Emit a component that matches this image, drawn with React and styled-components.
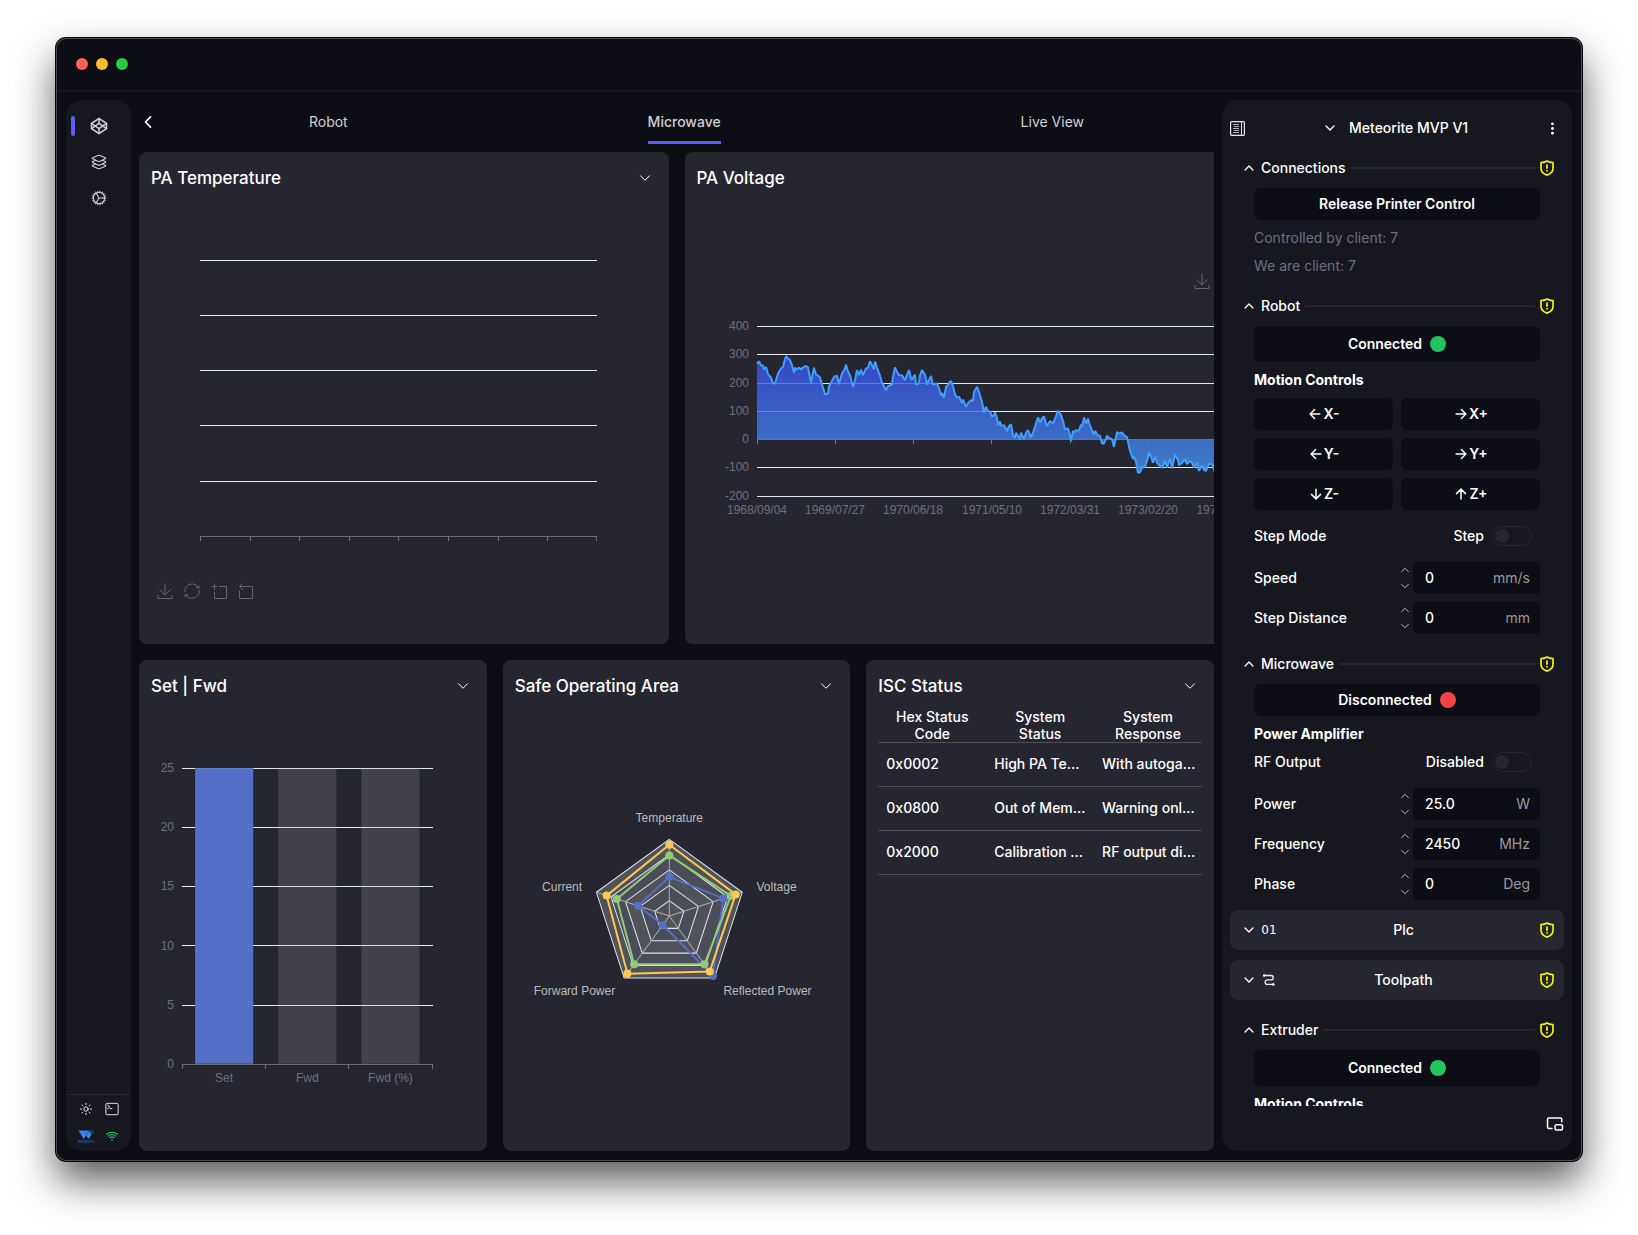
import React from 'react';
import styled, { createGlobalStyle } from 'styled-components';
import {
  IoLayersOutline,
  IoCogOutline,
  IoSunnyOutline,
  IoTerminalOutline,
  IoWifi,
  IoChevronBack,
  IoChevronDown,
  IoChevronUp,
  IoEllipsisVertical,
  IoArrowBack,
  IoArrowForward,
  IoArrowDown,
  IoArrowUp,
} from 'react-icons/io5';
import { FiCodepen } from 'react-icons/fi';
import { PictureInPicture2 } from 'lucide-react';

const color = {
  base: '#0d0d15',
  panel: '#17171f',
  card: '#262630',
  text: '#ffffff',
  soft: '#d0d0d2',
  muted: '#6b7080',
  unit: '#9a9a9e',
  accent: '#5c5cff',
  warn: '#f2f20d',
  ok: '#22c55e',
  bad: '#ef4444',
  axis: '#6e7079',
  grid: '#e0e6f1',
};

const GlobalStyle = createGlobalStyle`
  *, *::before, *::after { box-sizing: border-box; }
  body {
    margin: 0;
    background: #fff;
    color: ${color.text};
    font: 500 14px/20px Inter, "Liberation Sans", sans-serif;
  }
  button, input, select {
    font: inherit;
    color: inherit;
    background: none;
    border: 0;
    padding: 0;
    margin: 0;
  }
  button { cursor: pointer; }
  svg { display: block; flex: none; }
`;

/* ---------- window frame ---------- */

const Desktop = styled.div`
  min-height: 100vh;
  padding: 38px 56px 74px;
  display: flex;
  overflow: hidden;
`;

const AppWindow = styled.div`
  flex: 1;
  min-width: 0;
  height: calc(100vh - 112px);
  display: flex;
  flex-direction: column;
  border-radius: 10px;
  background: ${color.base};
  box-shadow: inset 0 0 0 1px #4c4c52, 0 0 0 1px #050507, 0 20px 40px rgba(0, 0, 0, 0.65);
`;

const TitleBar = styled.header`
  height: 54px;
  flex: none;
  padding: 0 19px;
  display: flex;
  align-items: center;
  gap: 8px;
  margin: 0 1px;
  border-bottom: 2px solid ${color.panel};
`;

const Light = styled.button`
  width: 12px;
  height: 12px;
  border-radius: 50%;
  background: ${(p) => p.$tone};
`;

const Workspace = styled.div`
  flex: 1;
  min-height: 0;
  padding: 8px 10px 10px;
  display: flex;
  gap: 8px;
`;

/* ---------- left rail ---------- */

const Rail = styled.nav`
  width: 65px;
  flex: none;
  display: flex;
  flex-direction: column;
  border-radius: 16px;
  background: ${color.panel};
`;

const RailItems = styled.div`
  flex: 1;
  padding-top: 8px;
`;

const RailButton = styled.button`
  width: 100%;
  height: 36px;
  display: grid;
  grid-template-columns: 4px 1fr 4px;
  align-items: center;
  justify-items: center;
  padding: 0 5px;
  color: ${color.soft};

  &::before {
    content: '';
    width: 4px;
    height: 20px;
    border-radius: 2px;
    background: ${(p) => (p.$active ? color.accent : 'transparent')};
  }
`;

const RailFooter = styled.div`
  height: 57px;
  padding-left: 7px;
  display: grid;
  grid-template-columns: 26px 26px;
  grid-template-rows: 27px 28px;
  justify-items: center;
  justify-content: start;
  align-items: center;
  border-top: 1px solid ${color.card};
`;

const PlainButton = styled.button`
  display: flex;
  align-items: center;
  justify-content: center;
  color: ${(p) => p.$tone || color.text};
`;

/* ---------- centre ---------- */

const Board = styled.main`
  flex: 1;
  min-width: 0;
  display: flex;
  flex-direction: column;
  overflow: hidden;
`;

const TabBar = styled.div`
  height: 52px;
  flex: none;
  display: flex;
  padding-top: 8px;
`;

const BackButton = styled(PlainButton)`
  width: 20px;
  height: 28px;
  flex: none;
  justify-content: flex-start;
`;

const Tabs = styled.div`
  width: 100%;
  flex: none;
  display: flex;
  justify-content: space-around;
  align-items: flex-start;
`;

const Tab = styled.button`
  height: 36px;
  padding-bottom: 5px;
  color: ${color.soft};
  font-weight: ${(p) => (p.$active ? 500 : 400)};
  border-bottom: 3px solid ${(p) => (p.$active ? color.accent : 'transparent')};
`;

const Rows = styled.div`
  flex: 1;
  min-height: 0;
  display: grid;
  grid-template-rows: minmax(0, 1fr) minmax(0, 1fr);
  gap: 16px;
`;

const TopRow = styled.div`
  min-width: 0;
  display: flex;
  gap: 16px;
`;

const BottomRow = styled.div`
  display: grid;
  grid-template-columns: repeat(3, minmax(0, 1fr));
  gap: 16px;
`;

const CardBox = styled.section`
  min-width: 0;
  min-height: 0;
  flex: 0 0 ${(p) => p.$basis || 'auto'};
  display: flex;
  flex-direction: column;
  padding: 12px;
  border-radius: 8px;
  background: ${color.card};
  overflow: hidden;
`;

const CardHead = styled.div`
  height: 28px;
  flex: none;
  display: flex;
  align-items: center;
  justify-content: space-between;
  padding-right: 4px;

  path {
    stroke-width: 32px;
  }
`;

const CardTitle = styled.h2`
  margin: 0;
  font-size: 17px;
  line-height: 28px;
  font-weight: 500;
`;

const Plot = styled.svg`
  width: 100%;
  flex: 1;
  min-height: 0;
  font: 12px "Liberation Sans", Arial, sans-serif;
`;

const ToolRow = styled.div`
  display: flex;
  flex: none;
  gap: 11px;
  justify-content: ${(p) => (p.$end ? 'flex-end' : 'flex-start')};
  padding: ${(p) => (p.$end ? '81px 0 0' : '0 6px 33px')};
`;

const StatusTable = styled.table`
  width: 100%;
  margin-top: 8px;
  table-layout: fixed;
  border-collapse: collapse;

  th {
    padding: 0 12px;
    height: 35px;
    line-height: 17px;
    font-weight: 500;
    text-align: center;
    border-bottom: 1px solid #4f4f4f;
  }

  td {
    height: 44px;
    padding: 0 4px 2px 8px;
    overflow: hidden;
    white-space: nowrap;
    text-overflow: ellipsis;
    border-bottom: 1px solid #4f4f4f;
  }
`;

/* ---------- right panel ---------- */

const Side = styled.aside`
  width: 350px;
  flex: none;
  padding: 8px;
  display: flex;
  flex-direction: column;
  border-radius: 16px;
  background: ${color.panel};
`;

const SideHead = styled.div`
  height: 40px;
  flex: none;
  display: flex;
  align-items: center;
  justify-content: space-between;
  padding-right: 4px;
`;

const MachinePicker = styled.label`
  display: flex;
  align-items: center;
  gap: 12px;
  padding-left: 2px;

  select {
    appearance: none;
    outline: none;
  }
`;

const Scroller = styled.div`
  flex: 1;
  min-height: 0;
  display: flex;
  flex-direction: column;
  gap: 10px;
  overflow-y: auto;
  scrollbar-width: none;
`;

const Section = styled.section`
  flex: none;
`;

const SectionHead = styled.button`
  width: 100%;
  height: 40px;
  display: flex;
  align-items: center;
  gap: 5px;
  padding: 0 10px 0 12px;
  border-radius: 8px;
  flex: none;
  background: ${(p) => (p.$closed ? color.card : 'transparent')};
`;

const Rule = styled.span`
  flex: 1;
  height: 2px;
  background: ${color.card};
`;

const ClosedIcon = styled.span`
  width: 16px;
  display: flex;
  justify-content: center;
  font: 12px "DejaVu Sans", sans-serif;
`;

const ClosedTitle = styled.span`
  flex: 1;
  padding-right: 10px;
  text-align: center;
`;

const Body = styled.div`
  display: flex;
  flex-direction: column;
  gap: 8px;
  padding: 0 24px;
`;

const Action = styled.button`
  height: ${(p) => (p.$tall ? 36 : 32)}px;
  display: flex;
  align-items: center;
  justify-content: center;
  gap: ${(p) => (p.$tight ? 0 : 8)}px;
  border-radius: 6px;
  background: ${color.base};
  font-weight: 600;
`;

const Dot = styled.span`
  width: 16px;
  height: 16px;
  border-radius: 50%;
  background: ${(p) => p.$tone};
`;

const Note = styled.p`
  margin: 0;
  color: ${color.muted};
  font-weight: 400;
`;

const SubHead = styled.h3`
  margin: 0;
  font-size: 14px;
  line-height: 20px;
  font-weight: 700;
`;

const JogGrid = styled.div`
  display: grid;
  grid-template-columns: 1fr 1fr;
  gap: 8px;
`;

const ToggleRow = styled.div`
  display: flex;
  align-items: center;
  justify-content: space-between;
  padding: ${(p) => (p.$spaced ? '8px' : '0')} 8px 8px 0;
`;

const ToggleLabel = styled.label`
  display: flex;
  align-items: center;
  gap: 8px;
`;

const Switch = styled.input.attrs({ type: 'checkbox', role: 'switch' })`
  appearance: none;
  width: 40px;
  height: 20px;
  border: 1px solid ${color.card};
  border-radius: 10px;
  display: flex;
  align-items: center;
  padding: 0 2px;

  &::before {
    content: '';
    width: 14px;
    height: 14px;
    border-radius: 50%;
    background: ${color.card};
  }

  &:checked {
    justify-content: flex-end;
  }
`;

const FieldRow = styled.div`
  height: 32px;
  display: flex;
  align-items: center;
`;

const FieldName = styled.label`
  flex: 1;
`;

const Stepper = styled.div`
  width: 16px;
  height: 28px;
  display: flex;
  flex-direction: column;
  justify-content: space-between;

  path {
    stroke-width: 36px;
  }
`;

const FieldBox = styled.div`
  width: 127px;
  height: 32px;
  display: flex;
  align-items: center;
  padding: 0 10px 0 12px;
  border-radius: 4px;
  background: ${color.base};

  input {
    flex: 1;
    min-width: 0;
    outline: none;
  }

  span {
    color: ${color.unit};
    font-weight: 400;
  }
`;

const SideFoot = styled.div`
  height: 37px;
  flex: none;
  display: flex;
  align-items: center;
  justify-content: flex-end;
  padding-bottom: 2px;
`;

/* ---------- drawings ---------- */

const ShieldIcon = () => (
  <svg width="14" height="16" viewBox="0 0 14 16" fill="none" stroke={color.warn}>
    <path
      d="M7 1 C5.4 2.2 3.4 2.6 1 2.6 V8.6 C1 11.8 3.4 13.9 7 15.1 C10.6 13.9 13 11.8 13 8.6 V2.6 C10.6 2.6 8.6 2.2 7 1 Z"
      strokeWidth="1.7"
      strokeLinejoin="round"
    />
    <path d="M7 4.6 V8.8 M7 10 V11.6" strokeWidth="1.8" />
  </svg>
);

const LogIcon = () => (
  <svg width="15" height="15" viewBox="0 0 15 15" fill="none" stroke="#e6e6e8">
    <rect x="0.6" y="0.6" width="13.8" height="13.8" rx="1" strokeWidth="1.2" />
    <path d="M11.5 0.5 V14.5" />
    <path d="M3 3.5 H9 M4 5.5 H9 M3 7.5 H9 M4 9.5 H9 M3 11.5 H9" stroke="#b4b4b8" />
  </svg>
);

const RouteIcon = () => (
  <svg width="12" height="12" viewBox="0 0 12 12" fill="none" stroke="#f0f0f0" strokeWidth="1.3">
    <path d="M1 1.5 H8 A2.2 2.2 0 0 1 8 5.9 H4.4 A2.2 2.2 0 0 0 4.4 10.4 H11" />
    <circle cx="1.3" cy="1.5" r="0.7" fill="#f0f0f0" />
    <path d="M9.6 9.2 L11.2 10.4 L9.6 11.6" />
  </svg>
);

const GpuLogo = () => (
  <svg width="16" height="13" viewBox="0 0 16 13" fill="#3b82f6">
    <path d="M0.5 0.5 H11 L5.8 9 Z" />
    <path d="M11.4 0.8 L13.6 4.4 L10.8 9 L8.2 5.6 Z" />
    <path d="M12 0.5 H14.4 L13.2 2.5 Z M14.8 1 L15.8 2.8 L14 4 Z" fill="#2563c9" />
    <text x="8" y="12.6" fontSize="4" textAnchor="middle" fill="#2f5fae" fontFamily="Inter, sans-serif">
      WebGPU
    </text>
  </svg>
);

const toolPaths = {
  save: 'M8 0.5 V11 M2.5 6.5 L8 12 L13.5 6.5 M1 12 V15.5 H15 V12',
  restore: 'M0.8 9 A7.3 7.3 0 0 1 14.6 5 M15.2 7 A7.3 7.3 0 0 1 1.6 11.5 M15.3 2.5 L14.7 5.3 L12 4.6 M0.7 14 L1.4 11.3 L4 11.9',
  zoom: 'M0.5 3.5 H6 M3.5 0.5 V7 M3.5 9 V15.5 H15.5 V3.5 H8',
  back: 'M4.5 0.5 L1.5 3.5 L5 7 M2 3.5 H14.5 V15.5 H1.5 V7.5',
};

const toolNames = {
  save: 'Save as image',
  restore: 'Restore',
  zoom: 'Area zoom',
  back: 'Reset zoom',
};

function ChartTools({ end }) {
  return (
    <ToolRow $end={end}>
      {Object.keys(toolPaths).map((key) => (
        <PlainButton key={key} aria-label={toolNames[key]}>
          <svg width="16" height="16" viewBox="0 0 16 16" fill="none" stroke="#666666">
            <path d={toolPaths[key]} />
          </svg>
        </PlainButton>
      ))}
    </ToolRow>
  );
}

/* ---------- charts ---------- */

function GridLines({ x1, x2, ys }) {
  return (
    <g stroke={color.grid} shapeRendering="crispEdges">
      {ys.map((y) => (
        <line key={y} x1={x1} x2={x2} y1={y + 0.5} y2={y + 0.5} />
      ))}
    </g>
  );
}

function BaseAxis({ x1, x2, y, ticks }) {
  return (
    <g stroke={color.axis} shapeRendering="crispEdges">
      <line x1={x1} x2={x2} y1={y + 0.5} y2={y + 0.5} />
      {ticks.map((x) => (
        <line key={x} x1={x + 0.5} x2={x + 0.5} y1={y} y2={y + 5} />
      ))}
    </g>
  );
}

function TemperatureChart() {
  return (
    <Plot viewBox="0 0 506 390" preserveAspectRatio="xMinYMin meet" role="img" aria-label="PA temperature">
      <GridLines x1={49} x2={446} ys={[68, 123, 178, 233, 289]} />
      <BaseAxis x1={49} x2={446} y={344} ticks={[49, 99, 148, 198, 247, 297, 347, 396, 445]} />
    </Plot>
  );
}

const voltage = [
  [60, 268], [62, 276], [64, 262], [66, 261], [67, 247], [69, 256], [71, 231], [74, 219], [76, 198], [78, 198],
  [81, 233], [84, 251], [86, 256], [87, 271], [89, 294], [91, 286], [93, 280], [95, 262], [97, 235], [98, 254],
  [99, 245], [102, 254], [104, 247], [106, 254], [109, 260], [111, 254], [114, 198], [115, 221], [117, 253],
  [119, 229], [121, 226], [123, 219], [125, 195], [128, 160], [131, 162], [132, 188], [135, 207], [137, 221],
  [140, 225], [142, 195], [145, 233], [148, 251], [149, 265], [151, 239], [153, 227], [156, 186], [158, 209],
  [160, 245], [162, 227], [164, 247], [166, 227], [169, 251], [171, 253], [173, 276], [177, 248], [178, 275],
  [180, 253], [183, 225], [185, 200], [189, 174], [191, 188], [195, 194], [196, 221], [198, 254], [200, 239],
  [202, 227], [205, 227], [208, 209], [210, 227], [212, 245], [214, 215], [215, 212], [218, 229], [219, 194],
  [222, 198], [223, 227], [225, 245], [228, 229], [230, 194], [234, 224], [236, 194], [240, 198], [242, 180],
  [244, 156], [245, 165], [247, 147], [249, 186], [251, 192], [252, 201], [254, 206], [256, 188], [258, 159],
  [260, 147], [262, 151], [265, 129], [266, 141], [269, 115], [271, 129], [274, 139], [276, 136], [277, 168],
  [280, 186], [282, 168], [285, 133], [287, 95], [289, 115], [291, 101], [293, 98], [295, 80], [297, 86],
  [298, 96], [300, 76], [301, 51], [303, 64], [304, 48], [307, 51], [308, 45], [310, 29], [312, 48], [314, 54],
  [316, 15], [318, 6], [319, 24], [323, 0], [324, 24], [327, 1], [329, 24], [331, 33], [334, 7], [336, 24],
  [339, 56], [341, 78], [343, 60], [345, 74], [347, 82], [349, 56], [350, 48], [353, 65], [356, 56], [358, 74],
  [361, 101], [364, 86], [366, 65], [368, 36], [371, 39], [373, 15], [374, -6], [376, 31], [377, 24], [379, 33],
  [382, 31], [384, 53], [385, 45], [387, 78], [389, 56], [391, 74], [392, 60], [395, 31], [397, 18], [398, 31],
  [401, 15], [403, 13], [405, -14], [407, -14], [408, -6], [410, 13], [412, 6], [415, 1], [417, -26], [420, 27],
  [422, 21], [425, 25], [427, 15], [430, 9], [431, -8], [433, -41], [434, -49], [436, -69], [437, -61],
  [439, -79], [441, -118], [443, -116], [445, -100], [448, -96], [451, -65], [452, -46], [454, -61], [456, -82],
  [458, -61], [460, -82], [462, -91], [465, -100], [468, -76], [470, -100], [473, -67], [475, -102], [478, -53],
  [481, -73], [482, -91], [485, -82], [488, -71], [490, -87], [493, -76], [495, -82], [497, -99], [500, -82],
  [502, -111], [505, -91], [507, -108], [509, -111], [512, -87], [515, -87], [517, -108], [521, -126],
  [530, -110], [542, -134], [556, -120], [570, -140], [594, -128],
];

const voltageLevels = [
  [400, 37], [300, 65], [200, 94], [100, 122], [0, 150], [-100, 178], [-200, 207],
];

const voltageDates = ['1968/09/04', '1969/07/27', '1970/06/18', '1971/05/10', '1972/03/31', '1973/02/20', '1974/01/11'];

function VoltageChart() {
  const zero = 150.5;
  const points = voltage.map(([x, v]) => `${x},${(zero - v * 0.2833).toFixed(1)}`).join(' ');
  return (
    <Plot viewBox="0 0 594 342" preserveAspectRatio="xMinYMin meet" role="img" aria-label="PA voltage">
      <defs>
        <linearGradient id="voltageFill" gradientUnits="userSpaceOnUse" x1="0" y1="66" x2="0" y2="184">
          <stop offset="0" stopColor="#3a4de9" />
          <stop offset="1" stopColor="#4593e9" />
        </linearGradient>
      </defs>
      <GridLines x1={60} x2={594} ys={voltageLevels.filter(([v]) => v !== 0).map(([, y]) => y)} />
      <BaseAxis x1={60} x2={594} y={150} ticks={[60, 138, 216, 294, 373, 451, 529]} />
      <polygon points={`60,${zero} ${points} 594,${zero}`} fill="url(#voltageFill)" opacity="0.8" />
      <polyline points={points} fill="none" stroke="#409eff" strokeWidth="2" strokeLinejoin="bevel" />
      <g fill={color.axis}>
        {voltageLevels.map(([v, y]) => (
          <text key={v} x="52" y={y + 4} textAnchor="end">{v}</text>
        ))}
        {voltageDates.map((d, i) => (
          <text key={d} x={60 + Math.round(i * 78.2)} y="225" textAnchor="middle">{d}</text>
        ))}
      </g>
    </Plot>
  );
}

function PowerBars() {
  const levels = [[25, 68], [20, 127], [15, 186], [10, 245], [5, 304], [0, 363]];
  const bars = [['Set', 44, true], ['Fwd', 127, false], ['Fwd (%)', 210, false]];
  return (
    <Plot viewBox="0 0 323 438" preserveAspectRatio="xMinYMin meet" role="img" aria-label="Set and forward power">
      <GridLines x1={31} x2={281} ys={levels.slice(0, 5).map(([, y]) => y)} />
      {bars.map(([name, x, full]) => (
        <rect
          key={name}
          x={x}
          y="68"
          width="58"
          height="295"
          fill={full ? '#5470c6' : 'rgba(180, 180, 180, 0.2)'}
        />
      ))}
      <BaseAxis x1={31} x2={281} y={363} ticks={[31, 114, 197, 280]} />
      <g fill={color.axis}>
        {levels.map(([v, y]) => (
          <text key={v} x="23" y={y + 4} textAnchor="end">{v}</text>
        ))}
        {bars.map(([name, x]) => (
          <text key={name} x={x + 29} y="381" textAnchor="middle">{name}</text>
        ))}
      </g>
    </Plot>
  );
}

const CX = 154;
const CY = 215.5;
const RADIUS = 76.5;

const radarPoint = (i, r) => {
  const a = (i * 2 * Math.PI) / 5;
  return [CX + Math.sin(a) * r * RADIUS, CY - Math.cos(a) * r * RADIUS];
};

const ring = (values) => values.map((r, i) => radarPoint(i, r).map((n) => n.toFixed(1)).join(',')).join(' ');

/* axis order: temperature, voltage, reflected, forward, current */
const radarSeries = [
  ['#5470c6', [0.51, 0.74, 0.967, 0.145, 0.43]],
  ['#91cc75', [0.79, 0.844, 0.78, 0.78, 0.72]],
  ['#fac858', [0.93, 0.91, 0.897, 0.93, 0.86]],
];

function OperatingRadar() {
  return (
    <Plot viewBox="0 0 323 438" preserveAspectRatio="xMinYMin meet" role="img" aria-label="Safe operating area">
      {[1, 0.8, 0.6, 0.4, 0.2].map((r, i) => (
        <polygon key={r} points={ring([r, r, r, r, r])} fill={i % 2 ? '#4a4c57' : '#515158'} stroke={color.grid} />
      ))}
      <g stroke="#a9abb0">
        {[0, 1, 2, 3, 4].map((i) => {
          const [x, y] = radarPoint(i, 1);
          return <line key={i} x1={CX} y1={CY} x2={x} y2={y} />;
        })}
      </g>
      {radarSeries.map(([tone, values]) => (
        <g key={tone}>
          <polygon points={ring(values)} fill="none" stroke={tone} strokeWidth="2" strokeLinejoin="bevel" />
          {values.map((v, i) => {
            const [x, y] = radarPoint(i, v);
            return <circle key={i} cx={x} cy={y} r="4" fill={tone} />;
          })}
        </g>
      ))}
      <g fill="#bbbbbb">
        <text x="154" y="122" textAnchor="middle">Temperature</text>
        <text x="241" y="191">Voltage</text>
        <text x="208" y="294">Reflected Power</text>
        <text x="100" y="294" textAnchor="end">Forward Power</text>
        <text x="67" y="191" textAnchor="end">Current</text>
      </g>
    </Plot>
  );
}

/* ---------- composed parts ---------- */

function Card({ title, basis, children }) {
  return (
    <CardBox $basis={basis}>
      <CardHead>
        <CardTitle>{title}</CardTitle>
        <PlainButton aria-label={`${title} options`}>
          <IoChevronDown size={16} />
        </PlainButton>
      </CardHead>
      {children}
    </CardBox>
  );
}

function OpenSection({ title, children }) {
  return (
    <Section>
      <SectionHead aria-expanded="true">
        <IoChevronUp size={14} />
        {title}
        <Rule />
        <ShieldIcon />
      </SectionHead>
      <Body>{children}</Body>
    </Section>
  );
}

function ClosedSection({ title, icon }) {
  return (
    <SectionHead $closed aria-expanded="false">
      <IoChevronDown size={14} />
      <ClosedIcon>{icon}</ClosedIcon>
      <ClosedTitle>{title}</ClosedTitle>
      <ShieldIcon />
    </SectionHead>
  );
}

function Toggle({ name, state, spaced }) {
  return (
    <ToggleRow $spaced={spaced}>
      <span>{name}</span>
      <ToggleLabel>
        {state}
        <Switch />
      </ToggleLabel>
    </ToggleRow>
  );
}

function Field({ name, value, unit }) {
  const id = name.toLowerCase().replace(' ', '-');
  return (
    <FieldRow>
      <FieldName htmlFor={id}>{name}</FieldName>
      <Stepper>
        <PlainButton aria-label={`Increase ${name}`} $tone={color.soft}>
          <IoChevronUp size={12} />
        </PlainButton>
        <PlainButton aria-label={`Decrease ${name}`} $tone={color.soft}>
          <IoChevronDown size={12} />
        </PlainButton>
      </Stepper>
      <FieldBox>
        <input id={id} inputMode="decimal" defaultValue={value} />
        <span>{unit}</span>
      </FieldBox>
    </FieldRow>
  );
}

const jogs = [
  [IoArrowBack, 'X-'],
  [IoArrowForward, 'X+'],
  [IoArrowBack, 'Y-'],
  [IoArrowForward, 'Y+'],
  [IoArrowDown, 'Z-'],
  [IoArrowUp, 'Z+'],
];

const statusRows = [
  ['0x0002', 'High PA Te...', 'With autoga...'],
  ['0x0800', 'Out of Mem...', 'Warning onl...'],
  ['0x2000', 'Calibration ...', 'RF output di...'],
];

export default function App() {
  return (
    <Desktop>
      <GlobalStyle />
      <AppWindow>
        <TitleBar>
          <Light $tone="#ff5f57" aria-label="Close" />
          <Light $tone="#febc2e" aria-label="Minimize" />
          <Light $tone="#28c840" aria-label="Zoom" />
        </TitleBar>
        <Workspace>
          <Rail>
            <RailItems>
              <RailButton $active aria-label="Devices">
                <FiCodepen size={18} />
              </RailButton>
              <RailButton aria-label="Layers">
                <IoLayersOutline size={18} />
              </RailButton>
              <RailButton aria-label="Settings">
                <IoCogOutline size={18} />
              </RailButton>
            </RailItems>
            <RailFooter>
              <PlainButton aria-label="Theme">
                <IoSunnyOutline size={14} />
              </PlainButton>
              <PlainButton aria-label="Console">
                <IoTerminalOutline size={14} />
              </PlainButton>
              <GpuLogo />
              <PlainButton aria-label="Network" $tone={color.ok}>
                <IoWifi size={14} />
              </PlainButton>
            </RailFooter>
          </Rail>

          <Board>
            <TabBar>
              <BackButton aria-label="Back">
                <IoChevronBack size={18} />
              </BackButton>
              <Tabs role="tablist">
                <Tab role="tab">Robot</Tab>
                <Tab role="tab" $active aria-selected="true">Microwave</Tab>
                <Tab role="tab">Live View</Tab>
              </Tabs>
            </TabBar>
            <Rows>
              <TopRow>
                <Card title="PA Temperature" basis="calc(50% - 8px)">
                  <TemperatureChart />
                  <ChartTools />
                </Card>
                <Card title="PA Voltage" basis="618px">
                  <ChartTools end />
                  <VoltageChart />
                </Card>
              </TopRow>
              <BottomRow>
                <Card title="Set | Fwd">
                  <PowerBars />
                </Card>
                <Card title="Safe Operating Area">
                  <OperatingRadar />
                </Card>
                <Card title="ISC Status">
                  <StatusTable>
                    <thead>
                      <tr>
                        <th>Hex Status Code</th>
                        <th>System Status</th>
                        <th>System Response</th>
                      </tr>
                    </thead>
                    <tbody>
                      {statusRows.map((row) => (
                        <tr key={row[0]}>
                          {row.map((cell) => (
                            <td key={cell}>{cell}</td>
                          ))}
                        </tr>
                      ))}
                    </tbody>
                  </StatusTable>
                </Card>
              </BottomRow>
            </Rows>
          </Board>

          <Side>
            <SideHead>
              <PlainButton aria-label="Log">
                <LogIcon />
              </PlainButton>
              <MachinePicker>
                <IoChevronDown size={14} />
                <select aria-label="Machine">
                  <option>Meteorite MVP V1</option>
                </select>
              </MachinePicker>
              <PlainButton aria-label="More">
                <IoEllipsisVertical size={15} />
              </PlainButton>
            </SideHead>
            <Scroller>
              <OpenSection title="Connections">
                <Action>Release Printer Control</Action>
                <Note>Controlled by client: 7</Note>
                <Note>We are client: 7</Note>
              </OpenSection>
              <OpenSection title="Robot">
                <Action $tall>
                  Connected
                  <Dot $tone={color.ok} />
                </Action>
                <SubHead>Motion Controls</SubHead>
                <JogGrid>
                  {jogs.map(([Icon, name]) => (
                    <Action key={name} $tight>
                      <Icon size={16} />
                      {name}
                    </Action>
                  ))}
                </JogGrid>
                <Toggle name="Step Mode" state="Step" spaced />
                <Field name="Speed" value="0" unit="mm/s" />
                <Field name="Step Distance" value="0" unit="mm" />
              </OpenSection>
              <OpenSection title="Microwave">
                <Action>
                  Disconnected
                  <Dot $tone={color.bad} />
                </Action>
                <SubHead>Power Amplifier</SubHead>
                <Toggle name="RF Output" state="Disabled" />
                <Field name="Power" value="25.0" unit="W" />
                <Field name="Frequency" value="2450" unit="MHz" />
                <Field name="Phase" value="0" unit="Deg" />
              </OpenSection>
              <ClosedSection title="Plc" icon="01" />
              <ClosedSection title="Toolpath" icon={<RouteIcon />} />
              <OpenSection title="Extruder">
                <Action $tall>
                  Connected
                  <Dot $tone={color.ok} />
                </Action>
                <SubHead>Motion Controls</SubHead>
              </OpenSection>
            </Scroller>
            <SideFoot>
              <PlainButton aria-label="Pop out">
                <PictureInPicture2 size={18} />
              </PlainButton>
            </SideFoot>
          </Side>
        </Workspace>
      </AppWindow>
    </Desktop>
  );
}
